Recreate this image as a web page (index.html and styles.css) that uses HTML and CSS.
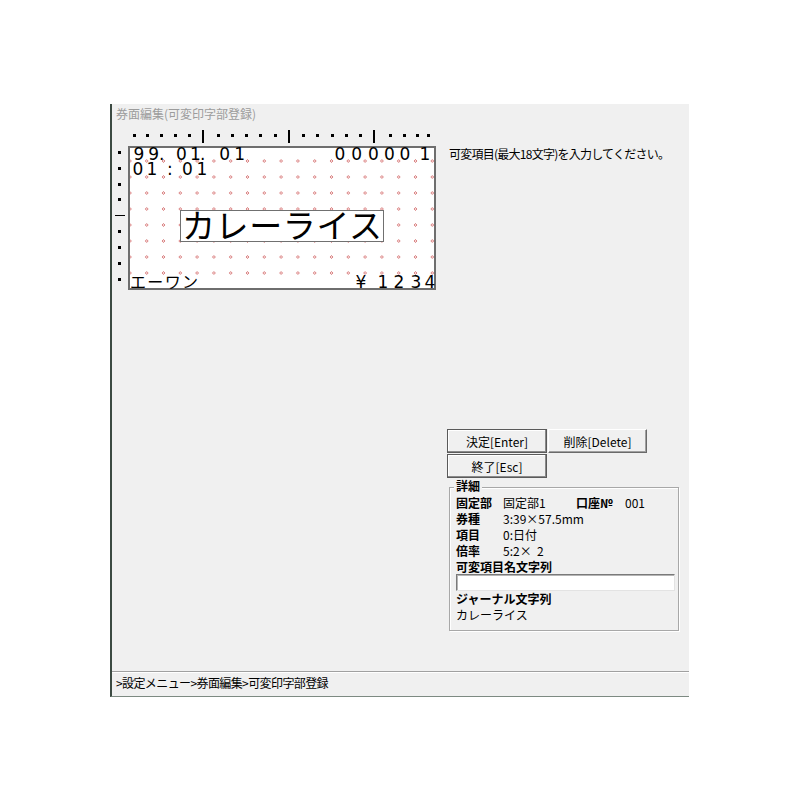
FILE: index.html
```html
<!DOCTYPE html>
<html lang="ja">
<head>
<meta charset="utf-8">
<title>券面編集(可変印字部登録)</title>
<link rel="stylesheet" href="styles.css">
</head>
<body>
<div class="window">
  <div class="title">券面編集(可変印字部登録)</div>
  <div class="main">
    <svg class="editor" width="328" height="172" viewBox="112 124 328 172" xmlns="http://www.w3.org/2000/svg">
      <defs>
        <pattern id="grid" x="138.3" y="153" width="16.8" height="16" patternUnits="userSpaceOnUse">
          <polygon points="8.4,6.5 9.9,8 8.4,9.5 6.9,8" fill="#f6d6d6" stroke="#cc5a5a" stroke-width="0.7"/>
        </pattern>
      </defs>
      <!-- top ruler -->
      <g class="ruler" fill="#000">
        <rect x="133" y="134" width="3" height="3"/>
        <rect x="146" y="134" width="3" height="3"/>
        <rect x="160" y="134" width="3" height="3"/>
        <rect x="174" y="134" width="3" height="3"/>
        <rect x="188" y="134" width="3" height="3"/>
        <rect x="202" y="130" width="2" height="13"/>
        <rect x="217" y="134" width="3" height="3"/>
        <rect x="231" y="134" width="3" height="3"/>
        <rect x="245" y="134" width="3" height="3"/>
        <rect x="259" y="134" width="3" height="3"/>
        <rect x="274" y="134" width="3" height="3"/>
        <rect x="288" y="130" width="2" height="13"/>
        <rect x="302" y="134" width="3" height="3"/>
        <rect x="316" y="134" width="3" height="3"/>
        <rect x="331" y="134" width="3" height="3"/>
        <rect x="345" y="134" width="3" height="3"/>
        <rect x="359" y="134" width="3" height="3"/>
        <rect x="373" y="130" width="2" height="13"/>
        <rect x="389" y="134" width="3" height="3"/>
        <rect x="403" y="134" width="3" height="3"/>
        <rect x="416" y="134" width="3" height="3"/>
        <rect x="427" y="134" width="3" height="3"/>
      </g>
      <!-- left ruler -->
      <g class="ruler" fill="#000">
        <rect x="118" y="151" width="3" height="3"/>
        <rect x="118" y="167" width="3" height="3"/>
        <rect x="118" y="183" width="3" height="3"/>
        <rect x="118" y="198" width="3" height="3"/>
        <rect x="115" y="215" width="10" height="1"/>
        <rect x="118" y="230" width="3" height="3"/>
        <rect x="118" y="246" width="3" height="3"/>
        <rect x="118" y="262" width="3" height="3"/>
        <rect x="118" y="278" width="3" height="3"/>
      </g>
      <!-- canvas -->
      <rect x="129" y="147" width="306" height="142" fill="#fff" stroke="#6e6e6e" stroke-width="2"/>
      <rect x="130" y="148" width="304" height="128" fill="url(#grid)"/>
      <text class="pt" x="133.6 148.3 159 176 190 200 219.3 234.3" y="160">99.01.01</text>
      <text class="pt" x="132.6 146.6 167 182 196.6" y="175">01:01</text>
      <text class="pt" x="334.6 351.3 368 384 399.6 419.6" y="160">000001</text>
      <rect x="180.5" y="210.5" width="203" height="31" fill="#fff" stroke="#707070" stroke-width="1"/>
      <text class="big" x="182" y="238" textLength="200" lengthAdjust="spacing">カレーライス</text>
      <text class="kana" x="130" y="288" textLength="68" lengthAdjust="spacing">エーワン</text>
      <text class="pt" x="355.4 377.6 393.6 410.6 424.6" y="288">¥1234</text>
    </svg>
    <div class="side">
      <p class="msg">可変項目(最大18文字)を入力してください。</p>
      <div class="buttons">
        <button class="btn default">決定[Enter]</button>
        <button class="btn">削除[Delete]</button>
        <button class="btn default">終了[Esc]</button>
      </div>
      <div class="group">
        <span class="legend">詳細</span>
        <div class="row four"><b>固定部</b><span>固定部1</span><b>口座№</b><span>001</span></div>
        <div class="row two"><b>券種</b><span>3:39×57.5mm</span></div>
        <div class="row two"><b>項目</b><span>0:日付</span></div>
        <div class="row two"><b>倍率</b><span class="pre">5:2×  2</span></div>
        <div class="row"><b>可変項目名文字列</b></div>
        <div class="input"></div>
        <div class="row"><b>ジャーナル文字列</b></div>
        <div class="row">カレーライス</div>
      </div>
    </div>
  </div>
  <div class="status">&gt;設定メニュー&gt;券面編集&gt;可変印字部登録</div>
</div>
</body>
</html>
```
FILE: styles.css
```css
html, body {
  margin: 0;
  padding: 0;
  background: #ffffff;
}

body {
  font-family: "Noto Sans CJK JP", "Noto Sans", sans-serif;
  font-size: 12px;
  color: #000;
}

.window {
  box-sizing: border-box;
  margin: 104px 0 0 110px;
  width: 579px;
  height: 593px;
  background: #f0f0f0;
  border-left: 2px solid #3c4a42;
  border-bottom: 1px solid #7d8a82;
  display: flex;
  flex-direction: column;
}

.title {
  height: 20px;
  line-height: 20px;
  padding-left: 4px;
  color: #9c9c9c;
  font-size: 12px;
  white-space: nowrap;
}

.main {
  flex: 1;
  display: flex;
  min-height: 0;
}

.editor {
  display: block;
  flex: none;
}

.editor .pt {
  font-family: "DejaVu Sans", sans-serif;
  font-size: 17px;
  fill: #000;
}

.editor .big {
  font-family: "Noto Sans CJK JP", sans-serif;
  font-size: 33px;
  fill: #000;
}

.editor .kana {
  font-family: "Noto Sans CJK JP", sans-serif;
  font-size: 16px;
  fill: #000;
}

.side {
  flex: 1;
  display: flex;
  flex-direction: column;
}

.msg {
  margin: 22px 0 0 9px;
  line-height: 16px;
  letter-spacing: -0.75px;
  white-space: nowrap;
}

.buttons {
  margin: 267px 0 0 7px;
  display: grid;
  grid-template-columns: 100px 99px;
  grid-template-rows: 24px 24px;
  column-gap: 1px;
  row-gap: 1px;
}

.btn {
  box-sizing: border-box;
  margin: 0;
  padding: 0;
  font-family: "Noto Sans CJK JP", sans-serif;
  font-size: 12px;
  color: #000;
  background: #f0f0f0;
  border: 1px solid;
  border-color: #ffffff #6a6a6a #6a6a6a #ffffff;
  box-shadow: inset -1px -1px 0 #a0a0a0;
}

.btn.default {
  border-color: #5a5a5a;
  box-shadow: inset -1px -1px 0 #8a8a8a, inset 1px 1px 0 #ffffff;
}

.group {
  position: relative;
  box-sizing: border-box;
  margin: 9px 0 0 9px;
  width: 230px;
  height: 144px;
  border: 1px solid #a8a8a8;
  box-shadow: inset 1px 1px 0 #ffffff, 1px 1px 0 #ffffff;
  padding: 7px 0 0 6px;
}

.legend {
  position: absolute;
  top: -10px;
  left: 4px;
  padding: 0 2px;
  line-height: 16px;
  background: #f0f0f0;
  font-weight: bold;
}

.row {
  height: 16px;
  line-height: 16px;
  white-space: nowrap;
}

.row.two {
  display: grid;
  grid-template-columns: 47px auto;
}

.row.four {
  display: grid;
  grid-template-columns: 47px 73px 49px auto;
}

.pre {
  white-space: pre;
}

.input {
  box-sizing: border-box;
  margin-top: -1px;
  width: 219px;
  height: 17px;
  background: #ffffff;
  border: 1px solid;
  border-color: #7a7a7a #e3e3e3 #e3e3e3 #7a7a7a;
  box-shadow: inset 1px 1px 0 #b4b4b4;
}

.status {
  box-sizing: border-box;
  height: 25px;
  border-top: 1px solid #a0a0a0;
  box-shadow: inset 0 1px 0 #ffffff;
  line-height: 22px;
  padding-left: 4px;
  letter-spacing: -0.6px;
  white-space: nowrap;
}
```
